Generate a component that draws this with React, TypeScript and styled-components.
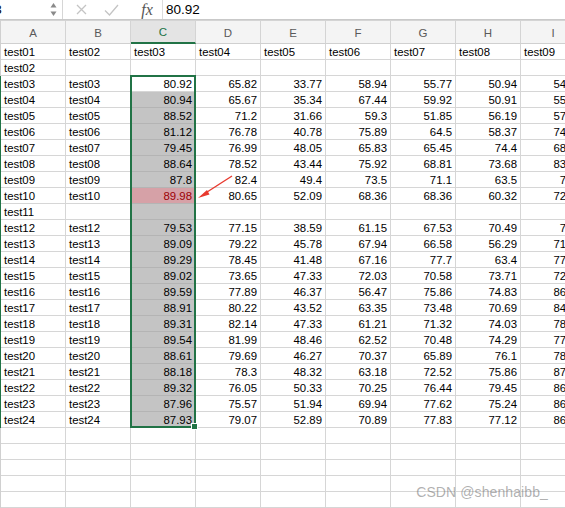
import styled, { createGlobalStyle } from "styled-components";

const GlobalStyle = createGlobalStyle`
  html, body {
    margin: 0;
    padding: 0;
    background: #ffffff;
  }
  body {
    font-family: "Liberation Sans", Arial, sans-serif;
  }
`;

const Window = styled.div`
  position: relative;
  width: 565px;
  height: 508px;
  overflow: hidden;
  background: #ffffff;
`;

const FormulaBar = styled.div`
  display: flex;
  align-items: center;
  height: 20px;
  box-sizing: border-box;
  border-bottom: 1px solid #c9c9c9;
  background: #ffffff;
`;

const NameBox = styled.div`
  display: flex;
  align-items: center;
  justify-content: space-between;
  width: 63px;
  height: 100%;
  box-sizing: border-box;
  border-right: 1px solid #d6d6d6;
  padding-right: 5px;
  overflow: hidden;
`;

const NameText = styled.span`
  margin-left: -15px;
  font-size: 13px;
  color: #000;
`;

const ToolIcon = styled.div<{ $first?: boolean }>`
  width: 30px;
  margin-left: ${(p) => (p.$first ? "3px" : "0")};
  display: flex;
  justify-content: center;
  align-items: center;
  color: #c4c4c4;
`;

const Fx = styled.div`
  width: 37px;
  padding-left: 6px;
  box-sizing: border-box;
  font-family: "Liberation Serif", "Times New Roman", serif;
  font-style: italic;
  font-size: 16px;
  color: #555;
  border-right: 1px solid #dcdcdc;
  height: 100%;
  display: flex;
  align-items: center;
  justify-content: center;
`;

const FormulaText = styled.div`
  padding-left: 3px;
  font-size: 13.5px;
  color: #000;
`;

const Sheet = styled.div`
  display: grid;
  grid-template-columns: 1px repeat(9, 65px);
  grid-template-rows: 24px;
  grid-auto-rows: 16px;
  font-size: 11.4px;
  color: #000;
`;

const Stub = styled.div<{ $row: number; $active?: boolean }>`
  grid-row: ${(p) => p.$row};
  grid-column: 1;
  background: ${(p) => (p.$active ? "#217346" : "#d0d0d0")};
`;

const ColHead = styled.div<{ $col: number; $active?: boolean }>`
  grid-row: 1;
  grid-column: ${(p) => p.$col};
  display: flex;
  align-items: center;
  justify-content: center;
  box-sizing: border-box;
  border-top: 1px solid #d4d4d4;
  border-right: 1px solid #d4d4d4;
  border-bottom: ${(p) => (p.$active ? "2px solid #217346" : "1px solid #d0d0d0")};
  background: ${(p) => (p.$active ? "#e4e4e4" : "#f4f4f4")};
  color: ${(p) => (p.$active ? "#217346" : "#5a5a5a")};
  font-size: 11.5px;
  padding-top: 1px;
`;

type Tone = "plain" | "selected" | "bad";

const Cell = styled.div<{ $row: number; $col: number; $num?: boolean; $tone: Tone }>`
  grid-row: ${(p) => p.$row};
  grid-column: ${(p) => p.$col};
  box-sizing: border-box;
  border-right: 1px solid #d6d6d6;
  border-bottom: 1px solid ${(p) => (p.$tone === "plain" ? "#d6d6d6" : "#b4b4b4")};
  padding: 0 3px;
  line-height: 16px;
  white-space: nowrap;
  overflow: hidden;
  text-align: ${(p) => (p.$num ? "right" : "left")};
  background: ${(p) =>
    p.$tone === "bad" ? "#d6a1a7" : p.$tone === "selected" ? "#c4c4c4" : "#ffffff"};
  color: ${(p) => (p.$tone === "bad" ? "#9c0006" : "#000")};
`;

const Selection = styled.div`
  grid-column: 4;
  grid-row: 4 / 26;
  position: relative;
  margin: -1px 0 0 -1px;
  border: 2px solid #217346;
  pointer-events: none;
`;

const FillHandle = styled.div`
  position: absolute;
  right: -4px;
  bottom: -4px;
  width: 5px;
  height: 5px;
  background: #217346;
  border: 1px solid #ffffff;
`;

const Arrow = styled.svg`
  position: absolute;
  left: 196px;
  top: 172px;
`;

const Watermark = styled.div`
  position: absolute;
  right: 17px;
  bottom: 8px;
  font-size: 14px;
  color: rgba(110, 110, 110, 0.55);
  letter-spacing: 0.1px;
`;

const cols = ["A", "B", "C", "D", "E", "F", "G", "H", "I"];

const data: number[][] = [
  [80.92, 65.82, 33.77, 58.94, 55.77, 50.94, 54.37],
  [80.94, 65.67, 35.34, 67.44, 59.92, 50.91, 55.12],
  [88.52, 71.2, 31.66, 59.3, 51.85, 56.19, 57.46],
  [81.12, 76.78, 40.78, 75.89, 64.5, 58.37, 74.25],
  [79.45, 76.99, 48.05, 65.83, 65.45, 74.4, 68.71],
  [88.64, 78.52, 43.44, 75.92, 68.81, 73.68, 83.56],
  [87.8, 82.4, 49.4, 73.5, 71.1, 63.5, 77.2],
  [89.98, 80.65, 52.09, 68.36, 68.36, 60.32, 72.48],
  [],
  [79.53, 77.15, 38.59, 61.15, 67.53, 70.49, 76.3],
  [89.09, 79.22, 45.78, 67.94, 66.58, 56.29, 71.85],
  [89.29, 78.45, 41.48, 67.16, 77.7, 63.4, 77.62],
  [89.02, 73.65, 47.33, 72.03, 70.58, 73.71, 72.19],
  [89.59, 77.89, 46.37, 56.47, 75.86, 74.83, 86.54],
  [88.91, 80.22, 43.52, 63.35, 73.48, 70.69, 84.27],
  [89.31, 82.14, 47.33, 61.21, 71.32, 74.03, 78.93],
  [89.54, 81.99, 48.46, 62.52, 70.48, 74.29, 77.15],
  [88.61, 79.69, 46.27, 70.37, 65.89, 76.1, 78.66],
  [88.18, 78.3, 48.32, 63.18, 72.52, 75.86, 87.34],
  [89.32, 76.05, 50.33, 70.25, 76.44, 79.45, 86.21],
  [87.96, 75.57, 51.94, 69.94, 77.62, 75.24, 86.72],
  [87.93, 79.07, 52.89, 70.89, 77.83, 77.12, 86.45],
];

function buildRows(): (string | number)[][] {
  const rows: (string | number)[][] = [];
  rows.push(Array.from({ length: 9 }, (_, i) => `test0${i + 1}`));
  rows.push(["test02"]);
  data.forEach((vals, i) => {
    const label = `test${String(i + 3).padStart(2, "0")}`;
    rows.push(vals.length ? [label, label, ...vals] : [label]);
  });
  for (let i = 0; i < 5; i++) rows.push([]);
  return rows;
}

function toneFor(row: number, col: number): Tone {
  if (col !== 2 || row < 4 || row > 24) return "plain";
  if (row === 10) return "bad";
  return "selected";
}

function App() {
  const rows = buildRows();

  return (
    <Window>
      <GlobalStyle />
      <FormulaBar>
        <NameBox>
          <NameText>C3</NameText>
          <svg width="7" height="15" viewBox="0 0 7 15">
            <path d="M3.5 1 L6.5 5.5 L0.5 5.5 Z" fill="#8a8a8a" />
            <path d="M3.5 14 L6.5 9.5 L0.5 9.5 Z" fill="#8a8a8a" />
          </svg>
        </NameBox>
        <ToolIcon $first>
          <svg width="11" height="11" viewBox="0 0 11 11">
            <path d="M1 1 L10 10 M10 1 L1 10" stroke="currentColor" strokeWidth="1.3" fill="none" />
          </svg>
        </ToolIcon>
        <ToolIcon>
          <svg width="15" height="12" viewBox="0 0 15 12">
            <path d="M1 6.5 L5.5 11 L14 1" stroke="currentColor" strokeWidth="1.3" fill="none" />
          </svg>
        </ToolIcon>
        <Fx>fx</Fx>
        <FormulaText>80.92</FormulaText>
      </FormulaBar>

      <Sheet>
        <Stub $row={1} />
        {cols.map((c, ci) => (
          <ColHead key={c} $col={ci + 2} $active={c === "C"}>
            {c}
          </ColHead>
        ))}
        {rows.map((cells, r) => {
          const rowNum = r + 1;
          return [
            <Stub key={`s${r}`} $row={r + 2} $active={rowNum >= 3 && rowNum <= 24} />,
            ...cols.map((c, ci) => {
              const v = cells[ci];
              return (
                <Cell
                  key={`${r}-${c}`}
                  $row={r + 2}
                  $col={ci + 2}
                  $num={typeof v === "number"}
                  $tone={toneFor(rowNum, ci)}
                >
                  {v ?? ""}
                </Cell>
              );
            }),
          ];
        })}
        <Selection>
          <FillHandle />
        </Selection>
      </Sheet>

      <Arrow width="40" height="30" viewBox="0 0 40 30">
        <path d="M36 4 L8 22" stroke="#e8392e" strokeWidth="1.4" fill="none" />
        <path d="M2 26 L11 18 L13.5 22.5 Z" fill="#e8392e" />
      </Arrow>

      <Watermark>CSDN @shenhaibb_</Watermark>
    </Window>
  );
}

export default App;
